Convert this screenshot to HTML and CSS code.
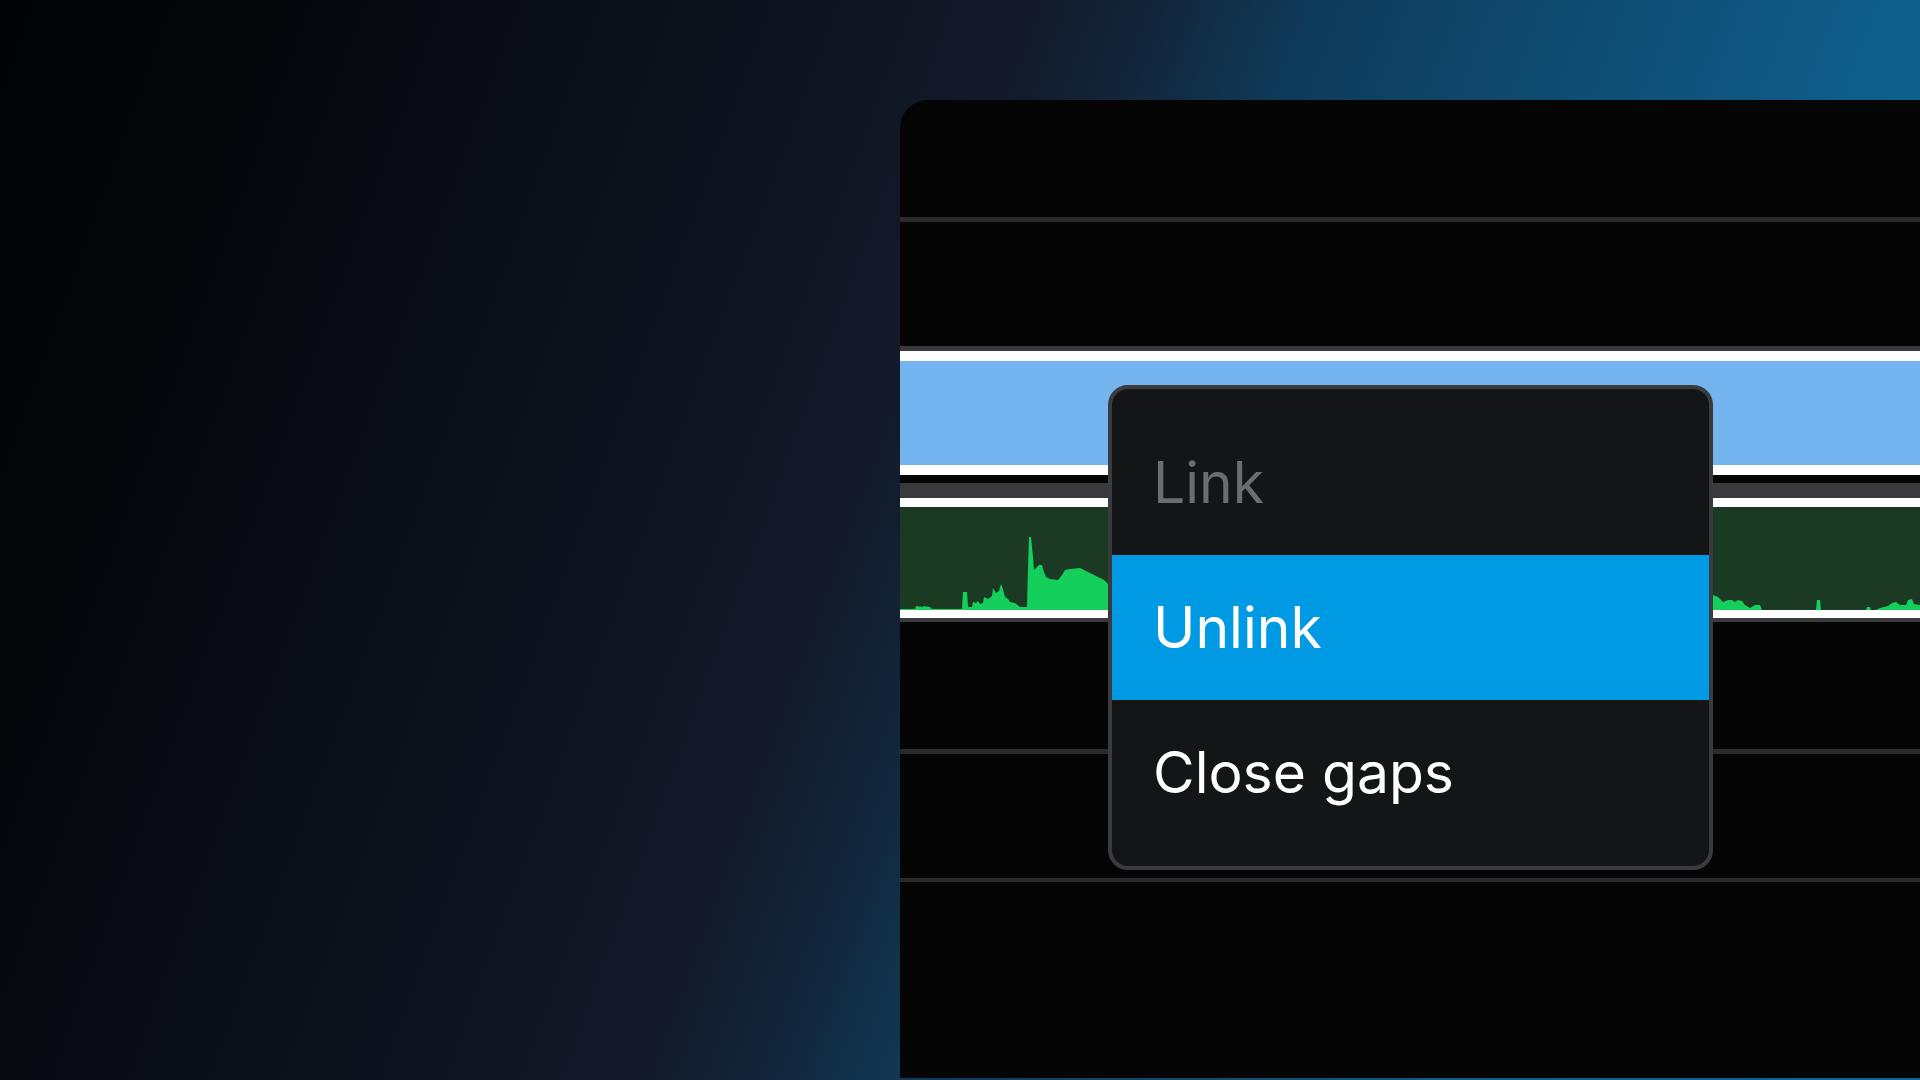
FILE: index.html
```html
<!DOCTYPE html>
<html lang="en">
<head>
    <meta charset="UTF-8">
    <meta name="viewport" content="width=device-width, initial-scale=1.0">
    <title>Timeline Context Menu</title>
    <link rel="stylesheet" href="styles.css">
</head>
<body>
    <div class="stage">
        <div class="timeline">
            <div class="ruler"></div>
            <div class="divider"></div>
            <div class="track"></div>

            <div class="lane-sep lane-sep-top"></div>
            <div class="clip clip-video"></div>
            <div class="gap"></div>
            <div class="lane-sep lane-sep-mid"></div>
            <div class="clip clip-audio">
                <svg class="wave" viewBox="0 0 1020 103" preserveAspectRatio="none">
                    <path d="M0,103 L0,102 L15,102 L16,99 L22,100 L24,99 L30,100 L32,102 L62,102 L63,85 L67,85 L68,100 L72,100 L73,95 L76,96 L78,94 L80,97 L83,96 L84,90 L88,92 L92,89 L93,81 L96,86 L99,84 L101,77 L103,82 L105,90 L108,92 L110,95 L115,96 L120,100 L127,100 L128,60 L129,30 L131,30 L133,50 L134,63 L137,60 L139,58 L142,58 L144,65 L146,70 L150,72 L158,73 L162,68 L165,63 L170,62 L180,61 L186,64 L192,67 L198,70 L204,73 L208,77 L260,80 L400,84 L600,86 L800,85 L813,88 L818,90 L823,95 L828,93 L832,93 L835,95 L838,93 L842,94 L845,98 L850,101 L855,98 L860,98 L862,103 L916,103 L917,93 L920,93 L921,103 L966,103 L967,100 L970,100 L971,103 L976,103 L980,101 L988,99 L992,96 L996,95 L1000,98 L1006,98 L1008,93 L1012,92 L1014,97 L1020,98 L1020,103 Z"/>
                </svg>
            </div>
            <div class="lane-sep lane-sep-bottom"></div>

            <div class="track track-tall"></div>
            <div class="divider"></div>
            <div class="track"></div>
            <div class="divider divider-thin"></div>
            <div class="track track-rest"></div>

            <div class="menu">
                <div class="menu-item disabled">Link</div>
                <div class="menu-item active">Unlink</div>
                <div class="menu-item">Close gaps</div>
            </div>
        </div>
    </div>
</body>
</html>
```

FILE: styles.css
```css
html, body {
    margin: 0;
    padding: 0;
}
body {
    width: 1920px;
    height: 1080px;
    overflow: hidden;
    font-family: 'Inter', 'Roboto', sans-serif;
    background: linear-gradient(110deg,
        #020306 0%,
        #06080d 15%,
        #0e1420 35%,
        #121a2a 45%,
        #13253a 50%,
        #0f3b5a 57%,
        #0f4d74 70%,
        #0f5f8c 83%,
        #0e6596 100%);
}
.stage {
    display: flex;
    padding: 100px 0 0 900px;
}
.timeline {
    position: relative;
    display: flex;
    flex-direction: column;
    width: 1020px;
    height: 978px;
    background-color: #050505;
    border-top-left-radius: 28px;
    overflow: hidden;
}
.ruler {
    height: 117px;
}
.divider {
    height: 5px;
    background-color: #2a2a2d;
}
.divider-thin {
    height: 4px;
}
.track {
    height: 124px;
}
.track-tall {
    height: 127px;
}
.track-rest {
    flex: 1;
}
.lane-sep {
    background-color: #3a3a3e;
}
.lane-sep-top {
    height: 5px;
}
.lane-sep-mid {
    height: 15px;
}
.lane-sep-bottom {
    height: 4px;
}
.gap {
    height: 8px;
}
.clip {
    border-top: 10px solid #ffffff;
    border-bottom: 10px solid #ffffff;
}
.clip-video {
    height: 104px;
    background-color: #74b4ef;
}
.clip-audio {
    height: 103px;
    border-top-width: 9px;
    border-bottom-width: 8px;
    background-color: #1b3a23;
}
.wave {
    display: block;
    width: 100%;
    height: 100%;
    fill: #14cf5b;
}
.menu {
    position: absolute;
    left: 208px;
    top: 285px;
    box-sizing: border-box;
    width: 605px;
    height: 485px;
    padding: 21px 0;
    background-color: #141517;
    border: 4px solid #3a3b3f;
    border-radius: 20px;
    overflow: hidden;
}
.menu-item {
    display: flex;
    align-items: center;
    height: 145px;
    padding-left: 41px;
    font-size: 57px;
    color: #ffffff;
}
.menu-item.disabled {
    color: #6c6d71;
}
.menu-item.active {
    background-color: #0099e4;
}
```
